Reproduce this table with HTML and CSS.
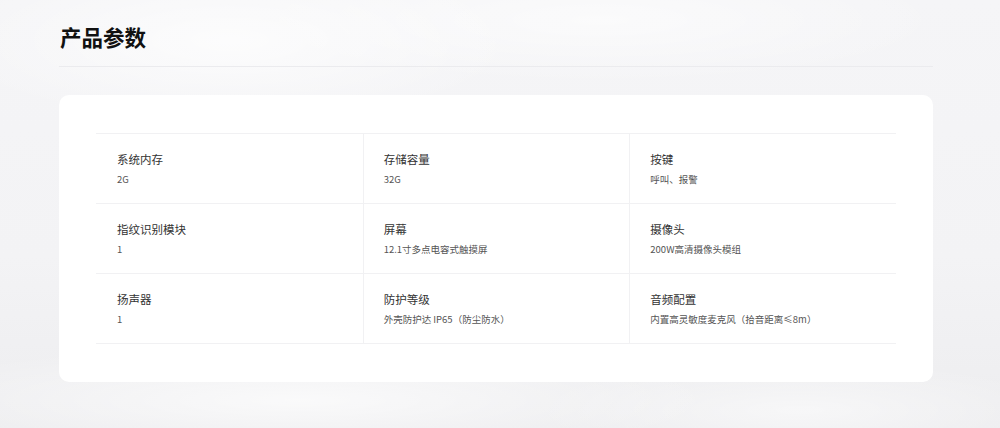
FILE: index.html
```html
<!DOCTYPE html>
<html lang="zh-CN">
<head>
<meta charset="utf-8">
<title>产品参数</title>
<link rel="stylesheet" href="styles.css">
</head>
<body>
<main class="page">
  <header class="page-head">
    <h1 class="page-title">产品参数</h1>
  </header>
  <section class="card">
    <div class="spec-grid">
      <div class="spec"><div class="spec-label">系统内存</div><div class="spec-value">2G</div></div>
      <div class="spec"><div class="spec-label">存储容量</div><div class="spec-value">32G</div></div>
      <div class="spec"><div class="spec-label">按键</div><div class="spec-value">呼叫、报警</div></div>
      <div class="spec"><div class="spec-label">指纹识别模块</div><div class="spec-value">1</div></div>
      <div class="spec"><div class="spec-label">屏幕</div><div class="spec-value">12.1寸多点电容式触摸屏</div></div>
      <div class="spec"><div class="spec-label">摄像头</div><div class="spec-value">200W高清摄像头模组</div></div>
      <div class="spec"><div class="spec-label">扬声器</div><div class="spec-value">1</div></div>
      <div class="spec"><div class="spec-label">防护等级</div><div class="spec-value">外壳防护达 IP65（防尘防水）</div></div>
      <div class="spec"><div class="spec-label">音频配置</div><div class="spec-value">内置高灵敏度麦克风（拾音距离≤8m）</div></div>
    </div>
  </section>
</main>
</body>
</html>
```

FILE: styles.css
```css
html, body {
  margin: 0;
  padding: 0;
}

body {
  width: 1000px;
  height: 428px;
  overflow: hidden;
  font-family: "Noto Sans CJK SC", "Noto Sans", sans-serif;
  background-color: #f2f2f4;
  background-image:
    radial-gradient(ellipse 420px 120px at 230px 40px, rgba(255,255,255,0.75), rgba(255,255,255,0) 70%),
    radial-gradient(ellipse 500px 90px at 600px 20px, rgba(255,255,255,0.6), rgba(255,255,255,0) 70%),
    radial-gradient(ellipse 600px 80px at 300px 400px, rgba(255,255,255,0.7), rgba(255,255,255,0) 70%),
    radial-gradient(ellipse 380px 70px at 800px 410px, rgba(255,255,255,0.55), rgba(255,255,255,0) 70%),
    linear-gradient(180deg, #f5f5f7 0%, #f3f3f5 60%, #ededef 100%);
}

.page {
  margin-left: 59px;
  width: 874px;
  display: flex;
  flex-direction: column;
}

.page-head {
  height: 67px;
  border-bottom: 1px solid #ebebee;
  box-sizing: border-box;
  padding-top: 23px;
}

.page-title {
  margin: 0 0 0 1px;
  font-size: 21.5px;
  line-height: 28px;
  font-weight: 700;
  color: #111;
  letter-spacing: 0;
}

.card {
  margin-top: 28px;
  background: #fff;
  border-radius: 10px;
  padding: 38px 37px 38px 37px;
}

.spec-grid {
  display: grid;
  grid-template-columns: repeat(3, 1fr);
  border-top: 1px solid #f1f1f3;
}

.spec {
  height: 70px;
  box-sizing: border-box;
  padding: 17px 20px 0 20px;
  border-bottom: 1px solid #f1f1f3;
  border-left: 1px solid #f1f1f3;
}

.spec:nth-child(3n+1) {
  border-left: none;
  padding-left: 21px;
}

.spec-label {
  font-size: 11.5px;
  line-height: 16px;
  color: #333;
}

.spec-value {
  margin-top: 5px;
  font-size: 9.5px;
  line-height: 14px;
  color: #555;
}
```
